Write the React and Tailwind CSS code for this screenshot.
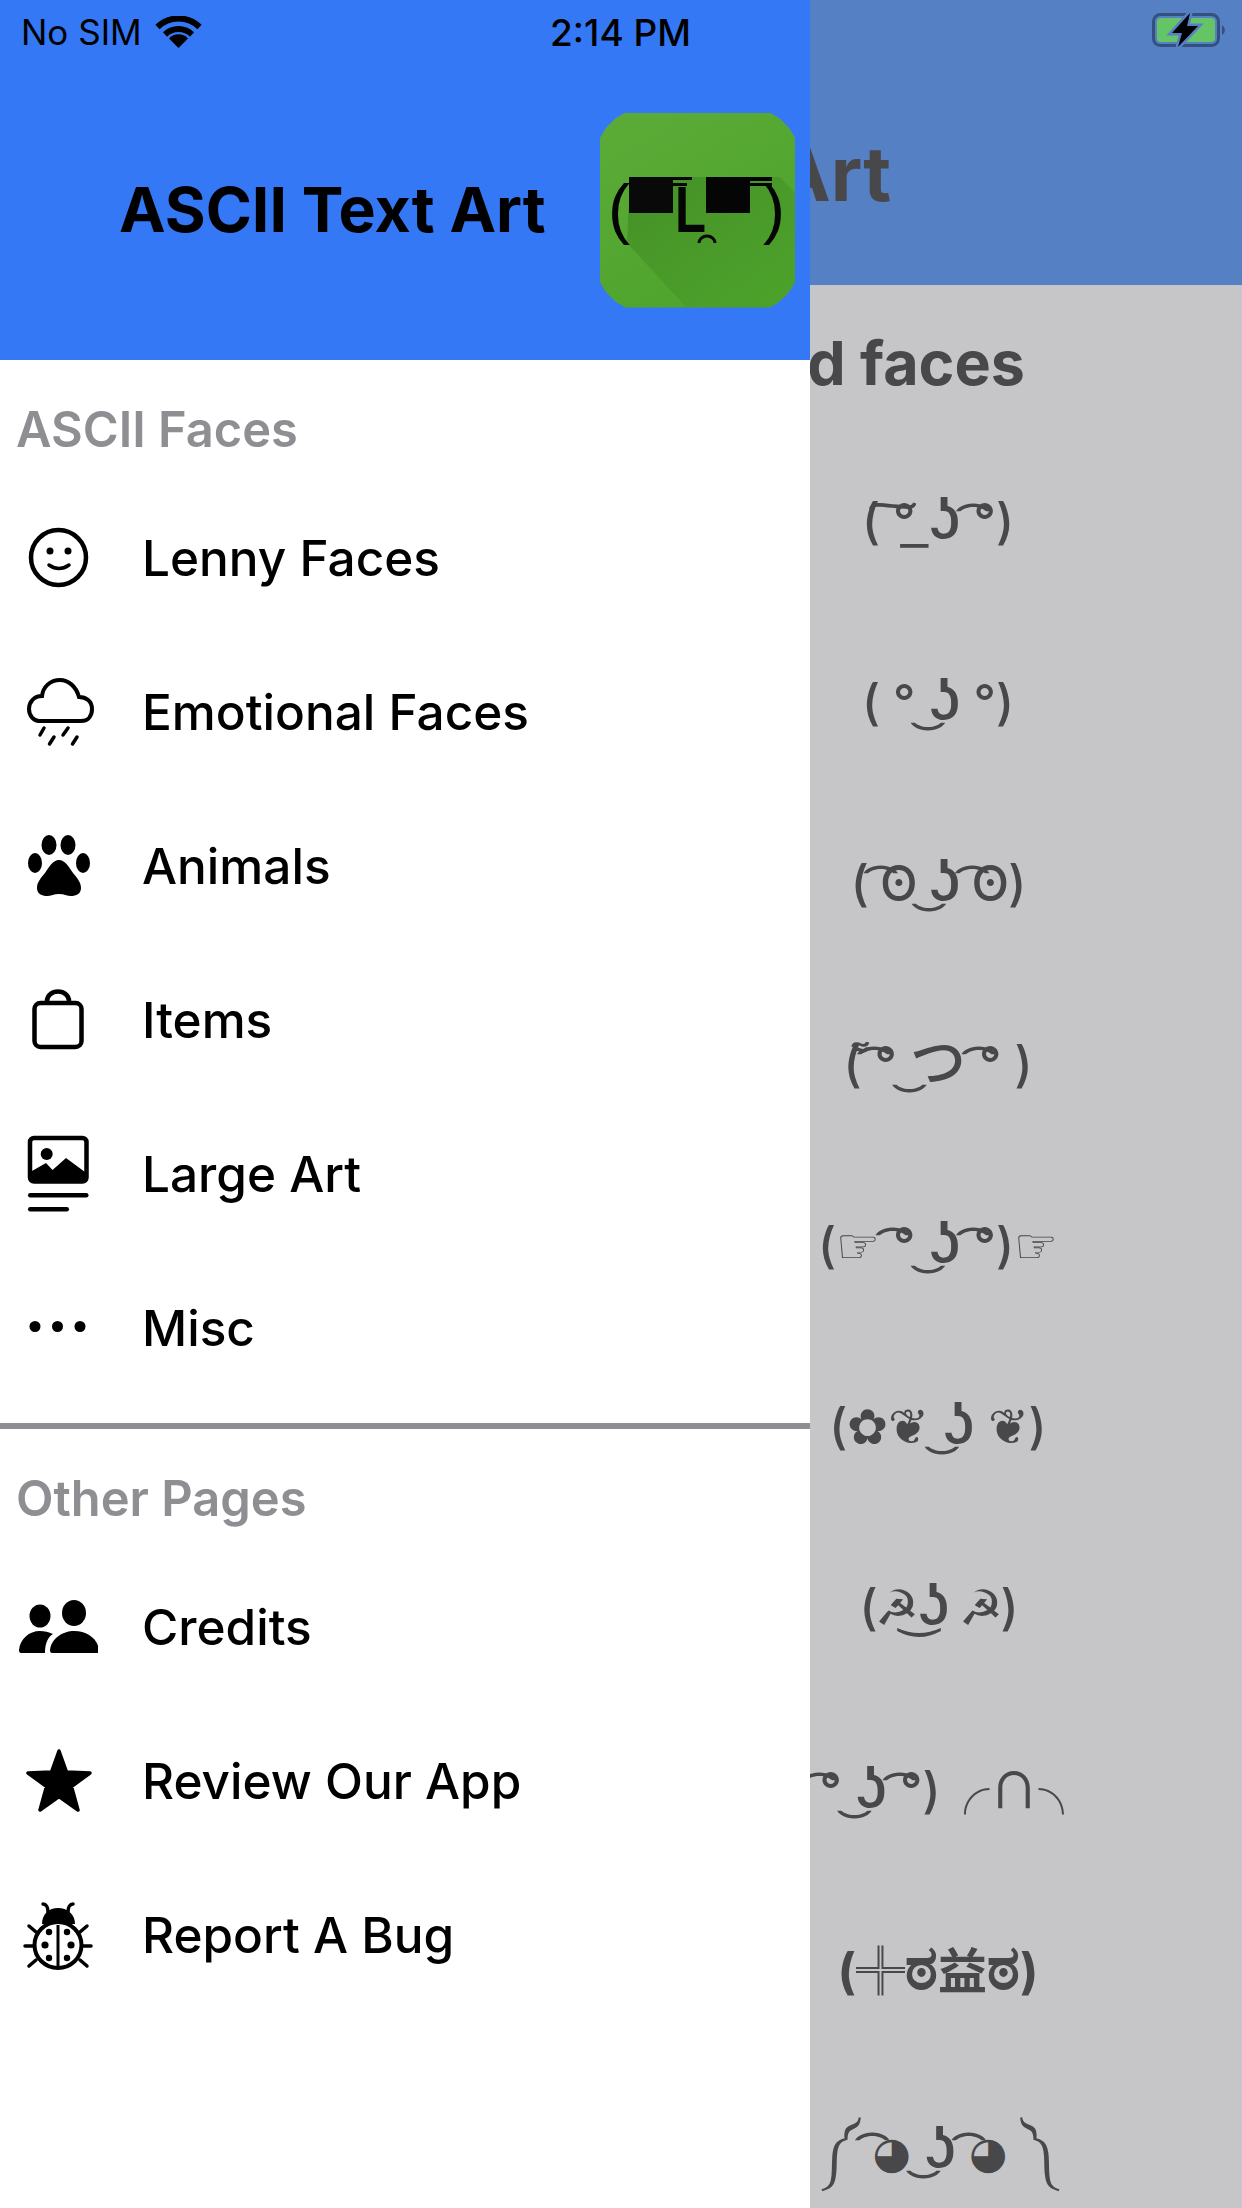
import React from "react";

const Ico = ({ children }) => (
  <svg viewBox="0 0 80 80" className="w-[80px] h-[80px] shrink-0">{children}</svg>
);

const Smile = () => (
  <Ico>
    <circle cx="40.5" cy="39.5" r="27.5" fill="none" stroke="#000" strokeWidth="4.5" />
    <circle cx="32" cy="33" r="3.5" />
    <circle cx="50" cy="33" r="3.5" />
    <path d="M31 47 Q41 54 51 47" fill="none" stroke="#000" strokeWidth="3.5" strokeLinecap="round" />
  </Ico>
);
const Rain = () => (
  <Ico>
    <path d="M21 49 H63 C71 49 74 43 74 37 C74 29 68 25 61 25 C58 14 50 8 42 8 C32 8 25 15 24 24 C16 24 11 30 11 37 C11 44 16 49 21 49 Z" fill="none" stroke="#000" strokeWidth="4" />
    <g stroke="#000" strokeWidth="3.5" strokeLinecap="round">
      <path d="M26 56 L22 63" />
      <path d="M36 65 L31.5 72" />
      <path d="M50 56 L45 63" />
      <path d="M59 65 L54.5 72" />
    </g>
  </Ico>
);
const Paw = () => (
  <Ico>
    <ellipse cx="31" cy="19" rx="7.5" ry="10" />
    <ellipse cx="50" cy="19" rx="7.5" ry="10" />
    <ellipse cx="17" cy="37" rx="7" ry="10" />
    <ellipse cx="65" cy="37" rx="7" ry="10" />
    <path d="M41 34 C35 34 31 41 27 47 C23 52 19 56 19 62 C19 68 24 70 29 70 C33 70 36 68 41 68 C46 68 49 70 53 70 C58 70 63 68 63 62 C63 56 59 52 55 47 C51 41 47 34 41 34Z" />
  </Ico>
);
const Bag = () => (
  <Ico>
    <rect x="16.5" y="23" width="47" height="44" rx="6" fill="none" stroke="#000" strokeWidth="4.5" />
    <path d="M29 23 v-2 a11 9.5 0 0 1 22 0 v2" fill="none" stroke="#000" strokeWidth="4.5" />
  </Ico>
);
const Art = () => (
  <Ico>
    <rect x="12" y="4" width="56.5" height="43.5" rx="4" fill="none" stroke="#000" strokeWidth="4.5" />
    <circle cx="28.7" cy="20" r="6" />
    <path d="M14 37 L28 29 L34.5 36 L48 24 L67 38 V47 H14 Z" />
    <rect x="10" y="59" width="60.5" height="4.5" rx="2.2" />
    <rect x="10" y="73" width="41" height="4.5" rx="2.2" />
  </Ico>
);
const Dots = () => (
  <Ico>
    <circle cx="17" cy="38.5" r="5.5" />
    <circle cx="39.5" cy="38.5" r="5.5" />
    <circle cx="62" cy="38.5" r="5.5" />
  </Ico>
);
const People = () => (
  <Ico>
    <ellipse cx="22" cy="29" rx="10.5" ry="11.5" />
    <ellipse cx="56" cy="26" rx="12" ry="13" />
    <path d="M34 66 Q32 66 32 63 C33 52 44 44 56.5 44 C69 44 80 52 81 63 Q81 66 79 66 Z" />
    <path d="M3 66 Q1 66 1 63 C2 52 11 44 22 44 C26 44 31 45 35 47 C30 50 27 56 27 66 Z" />
  </Ico>
);
const Star = () => (
  <Ico>
    <path d="M41 10 L48.5 31 L72 32 L53.5 45.5 L60 69 L41 55.5 L22 69 L28.5 45.5 L10 32 L33.5 31 Z" stroke="#000" strokeWidth="3.5" strokeLinejoin="round" />
  </Ico>
);
const Bug = () => (
  <Ico>
    <path d="M24 29 C24 19 31 13 40 13 C49 13 57 19 57 29 Z" />
    <path d="M30 17 C30 12 28 9 25 9 M50 17 C50 12 52 9 55 9" fill="none" stroke="#000" strokeWidth="3.5" strokeLinecap="round" />
    <ellipse cx="40" cy="50" rx="23.5" ry="23" fill="#fff" stroke="#000" strokeWidth="4" />
    <path d="M40 30 V72" stroke="#000" strokeWidth="3" />
    <circle cx="31" cy="37" r="3.2" /><circle cx="49" cy="37" r="3.2" />
    <circle cx="27" cy="50" r="3.6" /><circle cx="53" cy="50" r="3.6" />
    <circle cx="31" cy="63" r="3.2" /><circle cx="49" cy="63" r="3.2" />
    <g stroke="#000" strokeWidth="3.5" strokeLinecap="round">
      <path d="M7 51 H15" /><path d="M65 51 H73" />
      <path d="M11 31 L18 37" /><path d="M69 31 L62 37" />
      <path d="M11 71 L18 65" /><path d="M69 71 L62 65" />
    </g>
  </Ico>
);

const Wifi = () => (
  <svg viewBox="0 0 47 33" className="w-[47px] h-[33px]">
    <path d="M2.5 11 A30 30 0 0 1 44.5 11" fill="none" stroke="#000" strokeWidth="6" />
    <path d="M10 18.5 A19.5 19.5 0 0 1 37 18.5" fill="none" stroke="#000" strokeWidth="6" />
    <path d="M23.5 32 L14 22.5 A13 13 0 0 1 33 22.5 Z" />
  </svg>
);

const Battery = () => (
  <svg viewBox="0 0 74 34" className="w-[74px] h-[34px]">
    <rect x="1.5" y="1.5" width="65" height="31" rx="7" fill="none" stroke="#33507f" strokeWidth="3" />
    <path d="M70 12 Q73 14 73 17 Q73 20 70 22 Z" fill="#33507f" />
    <rect x="5" y="5" width="58" height="24" rx="4" fill="#65c466" />
    <path d="M38 0 L20 20 H30 L26 34 L46 13 H35 Z" fill="#5580c4" stroke="#5580c4" strokeWidth="5" />
    <path d="M38 0 L20 20 H30 L26 34 L46 13 H35 Z" fill="#000" />
  </svg>
);

const Logo = () => (
  <div className="w-[195px] h-[195px] shrink-0 mr-[15px] bg-[linear-gradient(150deg,#5cab38,#4ba32a)] [clip-path:polygon(13%_0,87%_0,92%_3%,97%_8%,100%_13%,100%_87%,97%_92%,92%_97%,87%_100%,13%_100%,8%_97%,3%_92%,0_87%,0_13%,3%_8%,8%_3%)]">
    <svg viewBox="0 0 195 195" className="w-full h-full">
      <defs>
        <linearGradient id="logoShade" x1="0.2" y1="0.1" x2="0.9" y2="0.9">
          <stop offset="0" stopColor="#3f8a22" stopOpacity="0.7" />
          <stop offset="1" stopColor="#3f8a22" stopOpacity="0.1" />
        </linearGradient>
      </defs>
      <path d="M27 130 L87 195 H195 V80 L180 64 L30 64 Z" fill="url(#logoShade)" />
      <text x="8" y="118" fontSize="66" fontFamily="Liberation Sans" fill="#050505">(</text>
      <text x="163" y="118" fontSize="66" fontFamily="Liberation Sans" fill="#050505">)</text>
      <rect x="29" y="64" width="44" height="36" fill="#090909" />
      <rect x="106" y="64" width="44" height="36" fill="#050505" />
      <rect x="67" y="64" width="25" height="3" fill="#090909" />
      <rect x="73" y="70" width="14" height="3" fill="#090909" />
      <rect x="140" y="64" width="32" height="4" fill="#050505" />
      <rect x="150" y="70" width="22" height="3" fill="#050505" />
      <text x="75" y="119" fontSize="65" textLength="31" lengthAdjust="spacingAndGlyphs" fontWeight="700" fontFamily="Liberation Sans" fill="#050505">L</text>
      <path d="M99 130 A8 7 0 0 1 115 130" fill="none" stroke="#050505" strokeWidth="3" />
    </svg>
  </div>
);

const Row = ({ icon, label }) => (
  <div className="h-[154px] flex items-center pl-[18px] gap-[44px]">
    {icon}
    <span className="text-[49.5px] font-medium text-black whitespace-nowrap">{label}</span>
  </div>
);

const Section = ({ children }) => (
  <div className="h-[121px] pl-[16px] pt-[18px] flex items-center text-[#8e8e93] text-[48.8px] font-semibold whitespace-nowrap">
    {children}
  </div>
);

const Cjk = ({ children, className = "" }) => (
  <span className={"[font-family:'Noto_Sans_CJK_SC'] " + className}>{children}</span>
);
const Eye = ({ children }) => (
  <span className="[font-family:'DejaVu_Sans'] text-[44px]">{children}</span>
);
const Big = ({ children }) => <span className="text-[62px] leading-none">{children}</span>;
const N = () => <span className="text-[58px] leading-none">ʖ</span>;

const faces = [
  { f: <>( ͠° ͟<N /> ͡°)</> },
  { f: <>( ° ͜<N /> °)</> },
  { f: <>( ͡ʘ ͜<N /> ͡ʘ)</>, c: "tracking-[-1px]" },
  { f: <>( ͌͡° ͜<Cjk className="text-[56px] leading-none">つ</Cjk> ͡°  )</> },
  { f: <>(☞ ͡° ͜<N /> ͡°)☞</> },
  { f: <>(✿❦ ͜<N /> ❦)</> },
  { f: <>(☭͜<N /> ☭)</>, c: "tracking-[-2px]" },
  { f: <>( ͡° ͜<N /> ͡°)<Cjk>╭∩╮</Cjk></> },
  { f: <>(<Cjk className="font-normal">╬</Cjk><Big>ಠ</Big><Cjk>益</Cjk><Big>ಠ</Big>)</>, c: "font-bold" },
  { f: <>༼ ͡<Eye>◕</Eye> ͜<N /> ͡<Eye>◕</Eye> ༽</> },
];

export default function App() {
  return (
    <div className="relative w-[1242px] h-[2208px] overflow-hidden bg-[#c6c6c8] [font-family:Inter,sans-serif]">
      {/* page beneath */}
      <div className="flex flex-col">
        <div className="h-[285px] bg-[#5580c4] flex flex-col">
          <div className="h-[60px] flex justify-end pr-[16px] pt-[13px]">
            <Battery />
          </div>
          <div className="flex-1 flex items-center justify-end pr-[351px]">
            <span className="text-[76px] font-bold text-[#48484a] whitespace-nowrap">ASCII Text Art</span>
          </div>
        </div>
        <div className="h-[146px] pt-[12px] flex items-center justify-end pr-[217px] text-[61px] font-bold text-[#48484a] whitespace-nowrap">
          Lenny based faces
        </div>
        <div className="flex flex-col pl-[634px]">
          {faces.map((r, i) => (
            <div key={i} className="h-[181px] flex items-center justify-center text-[#48484a] text-[49px] font-medium whitespace-nowrap">
              <span className={r.c}>{r.f}</span>
            </div>
          ))}
        </div>
      </div>

      {/* drawer over the page */}
      <div className="absolute left-0 top-0 w-[810px] h-[2208px] bg-white flex flex-col">
        <div className="h-[360px] bg-[#3478f6] flex flex-col shrink-0">
          <div className="h-[60px] pt-[5px] flex items-center text-black">
            <div className="w-[550px] pl-[21px] flex items-center gap-[13px] text-[35px]">
              <span>No SIM</span>
              <Wifi />
            </div>
            <span className="font-medium text-[37px]">2:14 PM</span>
          </div>
          <div className="flex-1 flex items-center pl-[119px]">
            <span className="text-[62.5px] font-bold text-black whitespace-nowrap">ASCII Text Art</span>
            <div className="flex-1" />
            <Logo />
          </div>
        </div>
        <Section>ASCII Faces</Section>
        <Row icon={<Smile />} label="Lenny Faces" />
        <Row icon={<Rain />} label="Emotional Faces" />
        <Row icon={<Paw />} label="Animals" />
        <Row icon={<Bag />} label="Items" />
        <Row icon={<Art />} label="Large Art" />
        <Row icon={<Dots />} label="Misc" />
        <div className="h-[6px] bg-[#8e8e93] mt-[18px] shrink-0" />
        <Section>Other Pages</Section>
        <Row icon={<People />} label="Credits" />
        <Row icon={<Star />} label="Review Our App" />
        <Row icon={<Bug />} label="Report A Bug" />
      </div>
    </div>
  );
}
